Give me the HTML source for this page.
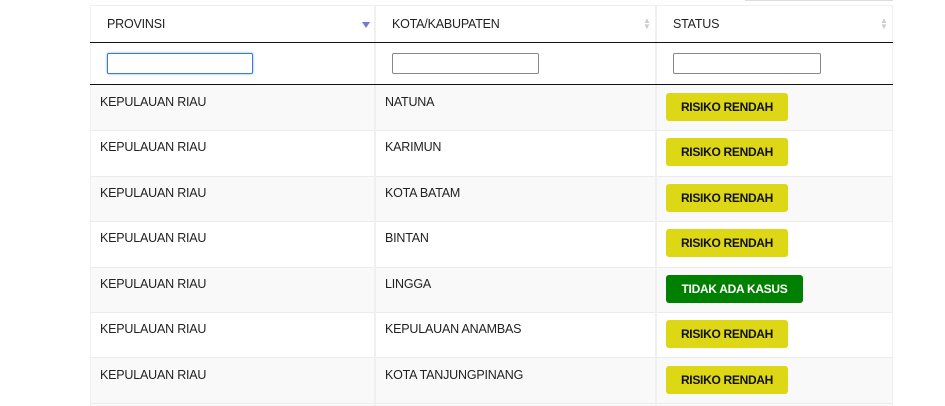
<!DOCTYPE html>
<html><head><style>
body{margin:0;width:945px;height:406px;background:#fff;position:relative;overflow:hidden;font-family:"Liberation Sans",sans-serif;color:#222}
.a{position:absolute}
.t{position:absolute;font-size:12.5px;letter-spacing:-0.2px}
.row{position:absolute;left:90px;width:803px;border-top:1px solid #ececec}
.vl{position:absolute;top:5px;width:2px;height:401px;background:#f0f0f0}
.in{position:absolute;height:19px;border:1px solid #888;border-radius:2px;background:#fff}
.b{position:absolute;left:666px;height:28px;border-radius:3px;background:#ddd715;font-weight:bold;font-size:12px;line-height:28px;text-align:center;color:#111;letter-spacing:-0.3px}
.g{background:#008000;color:#fff}
.arr{position:absolute;font-size:8px;color:#ccc;line-height:6px}
</style></head><body>
<div class="a" style="left:745px;top:0;width:148px;height:1px;background:#ddd"></div>
<div class="a" style="left:90px;top:5px;width:803px;height:1px;background:#f0f0f0"></div>
<div class="a" style="left:90px;top:85px;width:803px;height:321px;background:#f9f9f9"></div>
<div class="a" style="left:90px;top:131px;width:803px;height:45px;background:#fff"></div>
<div class="a" style="left:90px;top:222px;width:803px;height:45px;background:#fff"></div>
<div class="a" style="left:90px;top:312px;width:803px;height:46px;background:#fff"></div>
<div class="row" style="top:130px"></div><div class="row" style="top:176px"></div><div class="row" style="top:221px"></div><div class="row" style="top:267px"></div><div class="row" style="top:312px"></div><div class="row" style="top:357px"></div><div class="row" style="top:403px"></div>
<div class="vl" style="left:90px;width:1px"></div>
<div class="vl" style="left:374px"></div>
<div class="vl" style="left:655px"></div>
<div class="vl" style="left:892px;width:1px"></div>
<div class="a" style="left:90px;top:42px;width:803px;height:1px;background:#111"></div>
<div class="a" style="left:90px;top:84px;width:803px;height:1px;background:#111"></div>
<div class="t" style="left:107px;top:17px">PROVINSI</div>
<div class="t" style="left:392px;top:17px">KOTA/KABUPATEN</div>
<div class="t" style="left:673px;top:17px">STATUS</div>
<div class="a" style="left:362px;top:22px;width:0;height:0;border-left:4px solid transparent;border-right:4px solid transparent;border-top:6px solid #7a7ac8"></div>
<div class="arr" style="left:643px;top:18px">▲<br>▼</div>
<div class="arr" style="left:880px;top:18px">▲<br>▼</div>
<div class="in" style="left:107px;top:53px;width:144px;border:1px solid #3a7bd5;box-shadow:0 0 2px #7aa7e8"></div>
<div class="in" style="left:392px;top:53px;width:145px"></div>
<div class="in" style="left:673px;top:53px;width:146px"></div>
<div class="t" style="left:100px;top:95px">KEPULAUAN RIAU</div><div class="t" style="left:385px;top:95px">NATUNA</div><div class="b" style="top:93px;width:122px">RISIKO RENDAH</div>
<div class="t" style="left:100px;top:140px">KEPULAUAN RIAU</div><div class="t" style="left:385px;top:140px">KARIMUN</div><div class="b" style="top:138px;width:122px">RISIKO RENDAH</div>
<div class="t" style="left:100px;top:186px">KEPULAUAN RIAU</div><div class="t" style="left:385px;top:186px">KOTA BATAM</div><div class="b" style="top:184px;width:122px">RISIKO RENDAH</div>
<div class="t" style="left:100px;top:231px">KEPULAUAN RIAU</div><div class="t" style="left:385px;top:231px">BINTAN</div><div class="b" style="top:229px;width:122px">RISIKO RENDAH</div>
<div class="t" style="left:100px;top:277px">KEPULAUAN RIAU</div><div class="t" style="left:385px;top:277px">LINGGA</div><div class="b g" style="top:275px;width:137px">TIDAK ADA KASUS</div>
<div class="t" style="left:100px;top:322px">KEPULAUAN RIAU</div><div class="t" style="left:385px;top:322px">KEPULAUAN ANAMBAS</div><div class="b" style="top:320px;width:122px">RISIKO RENDAH</div>
<div class="t" style="left:100px;top:368px">KEPULAUAN RIAU</div><div class="t" style="left:385px;top:368px">KOTA TANJUNGPINANG</div><div class="b" style="top:366px;width:122px">RISIKO RENDAH</div>
</body></html>
